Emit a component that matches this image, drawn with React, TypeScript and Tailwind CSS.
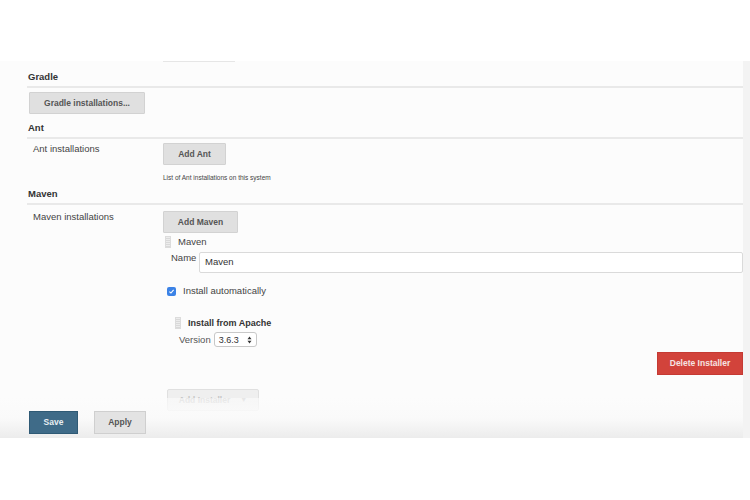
export default function App() {
  return (
    <div className="h-[500px] w-[750px] overflow-hidden bg-white font-['Liberation_Sans',Arial,sans-serif] text-[#333]">
      <div className="h-[61px] bg-white" />
      <div className="relative flex h-[377px] bg-[#fcfcfc]">
        <div className="w-[743px] shrink-0">
          <div className="ml-[163px] h-px w-[72px] bg-[#e6e6e6]" />

          <div className="ml-[27px]">
            <SectionHeading title="Gradle" className="mt-[8px]" />
            <div className="ml-[2px] mt-[4px]">
              <GreyButton className="w-[116px]">Gradle installations...</GreyButton>
            </div>

            <SectionHeading title="Ant" className="mt-[7px]" />
            <div className="mt-[4px] grid grid-cols-[136px_1fr]">
              <div className="pl-[6px] text-[9.5px] leading-[12px] text-[#444]">Ant installations</div>
              <div>
                <GreyButton className="w-[63px]">Add Ant</GreyButton>
                <div className="mt-[8px] text-[6.5px] leading-[9px] text-[#444]">List of Ant installations on this system</div>
              </div>
            </div>

            <SectionHeading title="Maven" className="mt-[5px]" />
            <div className="mt-[6px] grid grid-cols-[136px_1fr]">
              <div className="pl-[6px] text-[9.5px] leading-[12px] text-[#444]">Maven installations</div>
              <div>
                <GreyButton className="w-[75px]">Add Maven</GreyButton>

                <div className="mt-[3px] flex items-center gap-[7px] pl-[2px]">
                  <Handle />
                  <span className="text-[9.5px] leading-[12px] text-[#444]">Maven</span>
                </div>

                <div className="mt-[4px] flex items-start pl-[8px]">
                  <span className="w-[28px] text-[9.5px] leading-[12px] text-[#444]">Name</span>
                  <div className="flex h-[21px] flex-1 items-center rounded-[2px] border border-[#dadada] bg-white pl-[5px] text-[9.5px] font-medium text-[#333]">
                    Maven
                  </div>
                </div>

                <div className="mt-[12px] flex items-center gap-[7px] pl-[4px]">
                  <span className="flex h-[9px] w-[9px] items-center justify-center rounded-[2px] bg-[#3b82e6]">
                    <svg viewBox="0 0 10 10" className="h-[7px] w-[7px]" fill="none" stroke="white" strokeWidth="1.6">
                      <path d="M2 5.2 L4.2 7.2 L8 2.8" />
                    </svg>
                  </span>
                  <span className="text-[9.5px] leading-[12px] text-[#444]">Install automatically</span>
                </div>

                <div className="mt-[20px] flex items-center gap-[7px] pl-[12px]">
                  <Handle />
                  <span className="text-[9px] font-bold leading-[12px] text-[#333]">Install from Apache</span>
                </div>

                <div className="mt-[3px] flex items-center gap-[3px] pl-[16px]">
                  <span className="text-[9.5px] leading-[12px] text-[#555]">Version</span>
                  <span className="flex h-[15px] w-[43px] items-center justify-between rounded-[3px] border border-[#c8c8c8] bg-white px-[4px] text-[9px] leading-[12px] text-[#333]">
                    3.6.3
                    <svg viewBox="0 0 6 10" className="h-[8px] w-[5px]" fill="#333">
                      <path d="M3 0.5 L5.5 4 L0.5 4 Z M3 9.5 L5.5 6 L0.5 6 Z" />
                    </svg>
                  </span>
                </div>

                <div className="mt-[5px] flex justify-end">
                  <button className="block h-[23px] w-[86px] border border-[#c53a33] bg-[#d2433b] text-[8.5px] font-bold text-[#f6e3e2]">
                    Delete Installer
                  </button>
                </div>

                <div className="mt-[14px] pl-[4px]">
                  <div className="flex h-[22px] w-[92px] items-center justify-center gap-[10px] rounded-[2px] border border-[#e0e0e0] bg-[#efefef] text-[8.5px] font-bold text-[#c4c4c4]">
                    <span>Add Installer</span>
                    <span className="text-[7px]">▼</span>
                  </div>
                </div>
              </div>
            </div>
          </div>
        </div>
        <div className="w-[7px] bg-[#f3f3f3]" />

        <div className="absolute bottom-0 left-0 right-[7px] flex h-[40px] items-end gap-[16px] bg-gradient-to-b from-[#fcfcfc]/60 via-[#fafafa] to-[#ececec] pb-[4px] pl-[29px]">
          <button className="block h-[23px] w-[49px] border border-[#2f5a75] bg-[#3f6b88] text-[8.5px] font-bold text-[#e8eef2]">Save</button>
          <button className="block h-[23px] w-[52px] border border-[#cfcfcf] bg-[#e3e3e3] text-[8.5px] font-bold text-[#555]">Apply</button>
        </div>
      </div>
    </div>
  );
}

function SectionHeading({ title, className }: { title: string; className?: string }) {
  return (
    <div className={`border-b-2 border-[#e9e9e9] pb-[2px] pl-px text-[9.5px] font-bold leading-[14px] text-[#333] ${className ?? ""}`}>
      {title}
    </div>
  );
}

function GreyButton({ children, className }: { children: React.ReactNode; className?: string }) {
  return (
    <button className={`block h-[22px] rounded-[1px] border border-[#d2d2d2] bg-[#e0e0e0] text-[8.5px] font-bold text-[#555] ${className ?? ""}`}>
      {children}
    </button>
  );
}

function Handle() {
  return (
    <span className="block h-[12px] w-[6px] border border-[#dcdcdc] bg-[repeating-linear-gradient(0deg,#d9d9d9_0px,#d9d9d9_1px,#ececec_1px,#ececec_2px)]" />
  );
}
